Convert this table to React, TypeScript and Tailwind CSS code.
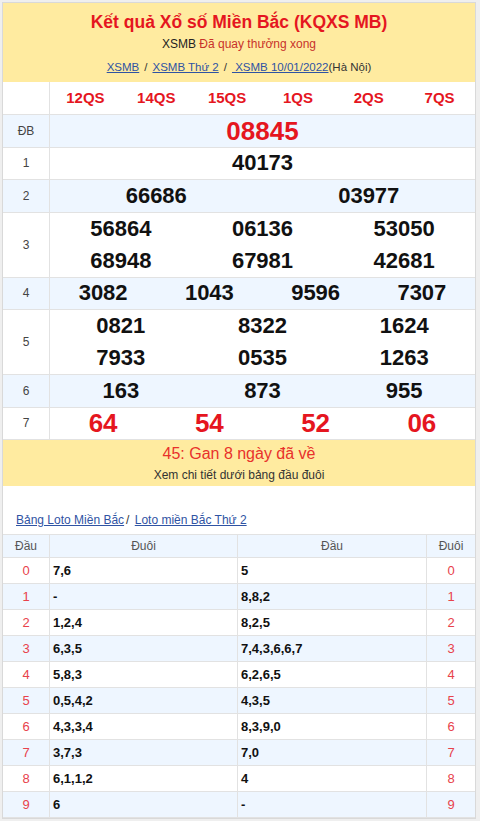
import React from "react"

const RED = "text-[#e5161f]"

type ResultRow = { label: string; lines: string[][]; blue: boolean; big?: boolean }

const results: ResultRow[] = [
  { label: "ĐB", lines: [["08845"]], blue: true, big: true },
  { label: "1", lines: [["40173"]], blue: false },
  { label: "2", lines: [["66686", "03977"]], blue: true },
  { label: "3", lines: [["56864", "06136", "53050"], ["68948", "67981", "42681"]], blue: false },
  { label: "4", lines: [["3082", "1043", "9596", "7307"]], blue: true },
  { label: "5", lines: [["0821", "8322", "1624"], ["7933", "0535", "1263"]], blue: false },
  { label: "6", lines: [["163", "873", "955"]], blue: true },
  { label: "7", lines: [["64", "54", "52", "06"]], blue: false, big: true },
]

const cols: Record<number, string> = {
  1: "grid-cols-1",
  2: "grid-cols-2",
  3: "grid-cols-3",
  4: "grid-cols-4",
  6: "grid-cols-6",
}

const loto = [
  ["0", "7,6", "5"],
  ["1", "-", "8,8,2"],
  ["2", "1,2,4", "8,2,5"],
  ["3", "6,3,5", "7,4,3,6,6,7"],
  ["4", "5,8,3", "6,2,6,5"],
  ["5", "0,5,4,2", "4,3,5"],
  ["6", "4,3,3,4", "8,3,9,0"],
  ["7", "3,7,3", "7,0"],
  ["8", "6,1,1,2", "4"],
  ["9", "6", "-"],
]

function ResultLine({ nums, big, single }: { nums: string[]; big?: boolean; single: boolean }) {
  const numCls = big ? `text-[26px] font-bold ${RED}` : "text-[22px] font-bold text-[#111]"
  return (
    <div className={`grid ${cols[nums.length]} ${single ? "h-[31.5px]" : "h-[32px]"} items-center`}>
      {nums.map((n, i) => (
        <div key={i} className={`text-center leading-[30px] ${numCls}`}>
          {n}
        </div>
      ))}
    </div>
  )
}

export default function App() {
  return (
    <div className="min-h-screen bg-[#efefef] pl-[2px] pt-[2px] font-['Liberation_Sans',Arial,sans-serif]">
      <div className="w-[474px] border border-[#d9d9d9] bg-white">
        {/* heading */}
        <div className="bg-[#ffeba0] pt-[7px] pb-[5px] text-center">
          <h1 className={`text-[17.5px] font-bold leading-[24px] ${RED}`}>
            Kết quả Xổ số Miền Bắc (KQXS MB)
          </h1>
          <div className="text-[12px] leading-[20px] text-[#222]">
            XSMB <span className="text-[#c8322a]">Đã quay thưởng xong</span>
          </div>
          <div className="mt-[3px] text-[11.5px] leading-[20px] text-[#333]">
            <a className="text-[#2f53a3] underline">XSMB</a>
            <span className="mx-[5px]">/</span>
            <a className="text-[#2f53a3] underline">XSMB Thứ 2</a>
            <span className="mx-[5px]">/</span>
            <a className="text-[#2f53a3] underline"> XSMB 10/01/2022</a>
            (Hà Nội)
          </div>
        </div>

        {/* results table */}
        <div className="flex border-b border-[#e2e2e2]">
          <div className="w-[47px] border-r border-[#e2e2e2]" />
          <div className="flex-1 grid grid-cols-6 h-[32px] items-center">
            {["12QS", "14QS", "15QS", "1QS", "2QS", "7QS"].map((q) => (
              <div key={q} className={`text-center text-[15px] font-bold ${RED}`}>
                {q}
              </div>
            ))}
          </div>
        </div>
        {results.map((r) => (
          <div
            key={r.label}
            className={`flex border-b border-[#e2e2e2] ${r.blue ? "bg-[#eef6ff]" : "bg-white"}`}
          >
            <div className="w-[47px] shrink-0 border-r border-[#e2e2e2] flex items-center justify-center text-[12px] text-[#444]">
              {r.label}
            </div>
            <div className="flex-1">
              {r.lines.map((l, i) => (
                <ResultLine key={i} nums={l} big={r.big} single={r.lines.length === 1} />
              ))}
            </div>
          </div>
        ))}

        {/* gan */}
        <div className="bg-[#ffeba0] pt-[3px] pb-[1px] text-center">
          <div className="text-[16px] leading-[22px] text-[#e8312b]">45: Gan 8 ngày đã về</div>
          <div className="text-[12px] leading-[20px] text-[#333]">Xem chi tiết dưới bảng đầu đuôi</div>
        </div>

        {/* loto links */}
        <div className="px-[13px] pt-[25px] pb-[5px] text-[12px] leading-[18px] text-[#333]">
          <a className="text-[#2f53a3] underline">Bảng Loto Miền Bắc</a>
          <span className="mx-[2px]">/</span>{" "}
          <a className="text-[#2f53a3] underline">Loto miền Bắc Thứ 2</a>
        </div>

        {/* loto table */}
        <div className="border-t border-[#e2e2e2]">
          <div className="grid grid-cols-[47px_188px_189px_1fr] bg-[#eef6ff] border-b border-[#e2e2e2] h-[23px] text-[12px] text-[#555]">
            <div className="flex items-center justify-center border-r border-[#e2e2e2]">Đầu</div>
            <div className="flex items-center justify-center border-r border-[#e2e2e2]">Đuôi</div>
            <div className="flex items-center justify-center border-r border-[#e2e2e2]">Đầu</div>
            <div className="flex items-center justify-center">Đuôi</div>
          </div>
          {loto.map(([d, a, b], i) => (
            <div
              key={d}
              className={`grid grid-cols-[47px_188px_189px_1fr] border-b border-[#e2e2e2] h-[26px] ${
                i % 2 === 1 ? "bg-[#eef6ff]" : "bg-white"
              }`}
            >
              <div className="flex items-center justify-center border-r border-[#e2e2e2] text-[13px] text-[#e8424b]">
                {d}
              </div>
              <div className="flex items-center px-[3px] border-r border-[#e2e2e2] text-[13px] font-bold text-[#111]">
                {a}
              </div>
              <div className="flex items-center px-[3px] border-r border-[#e2e2e2] text-[13px] font-bold text-[#111]">
                {b}
              </div>
              <div className="flex items-center justify-center text-[13px] text-[#e8424b]">{d}</div>
            </div>
          ))}
        </div>
      </div>
    </div>
  )
}
